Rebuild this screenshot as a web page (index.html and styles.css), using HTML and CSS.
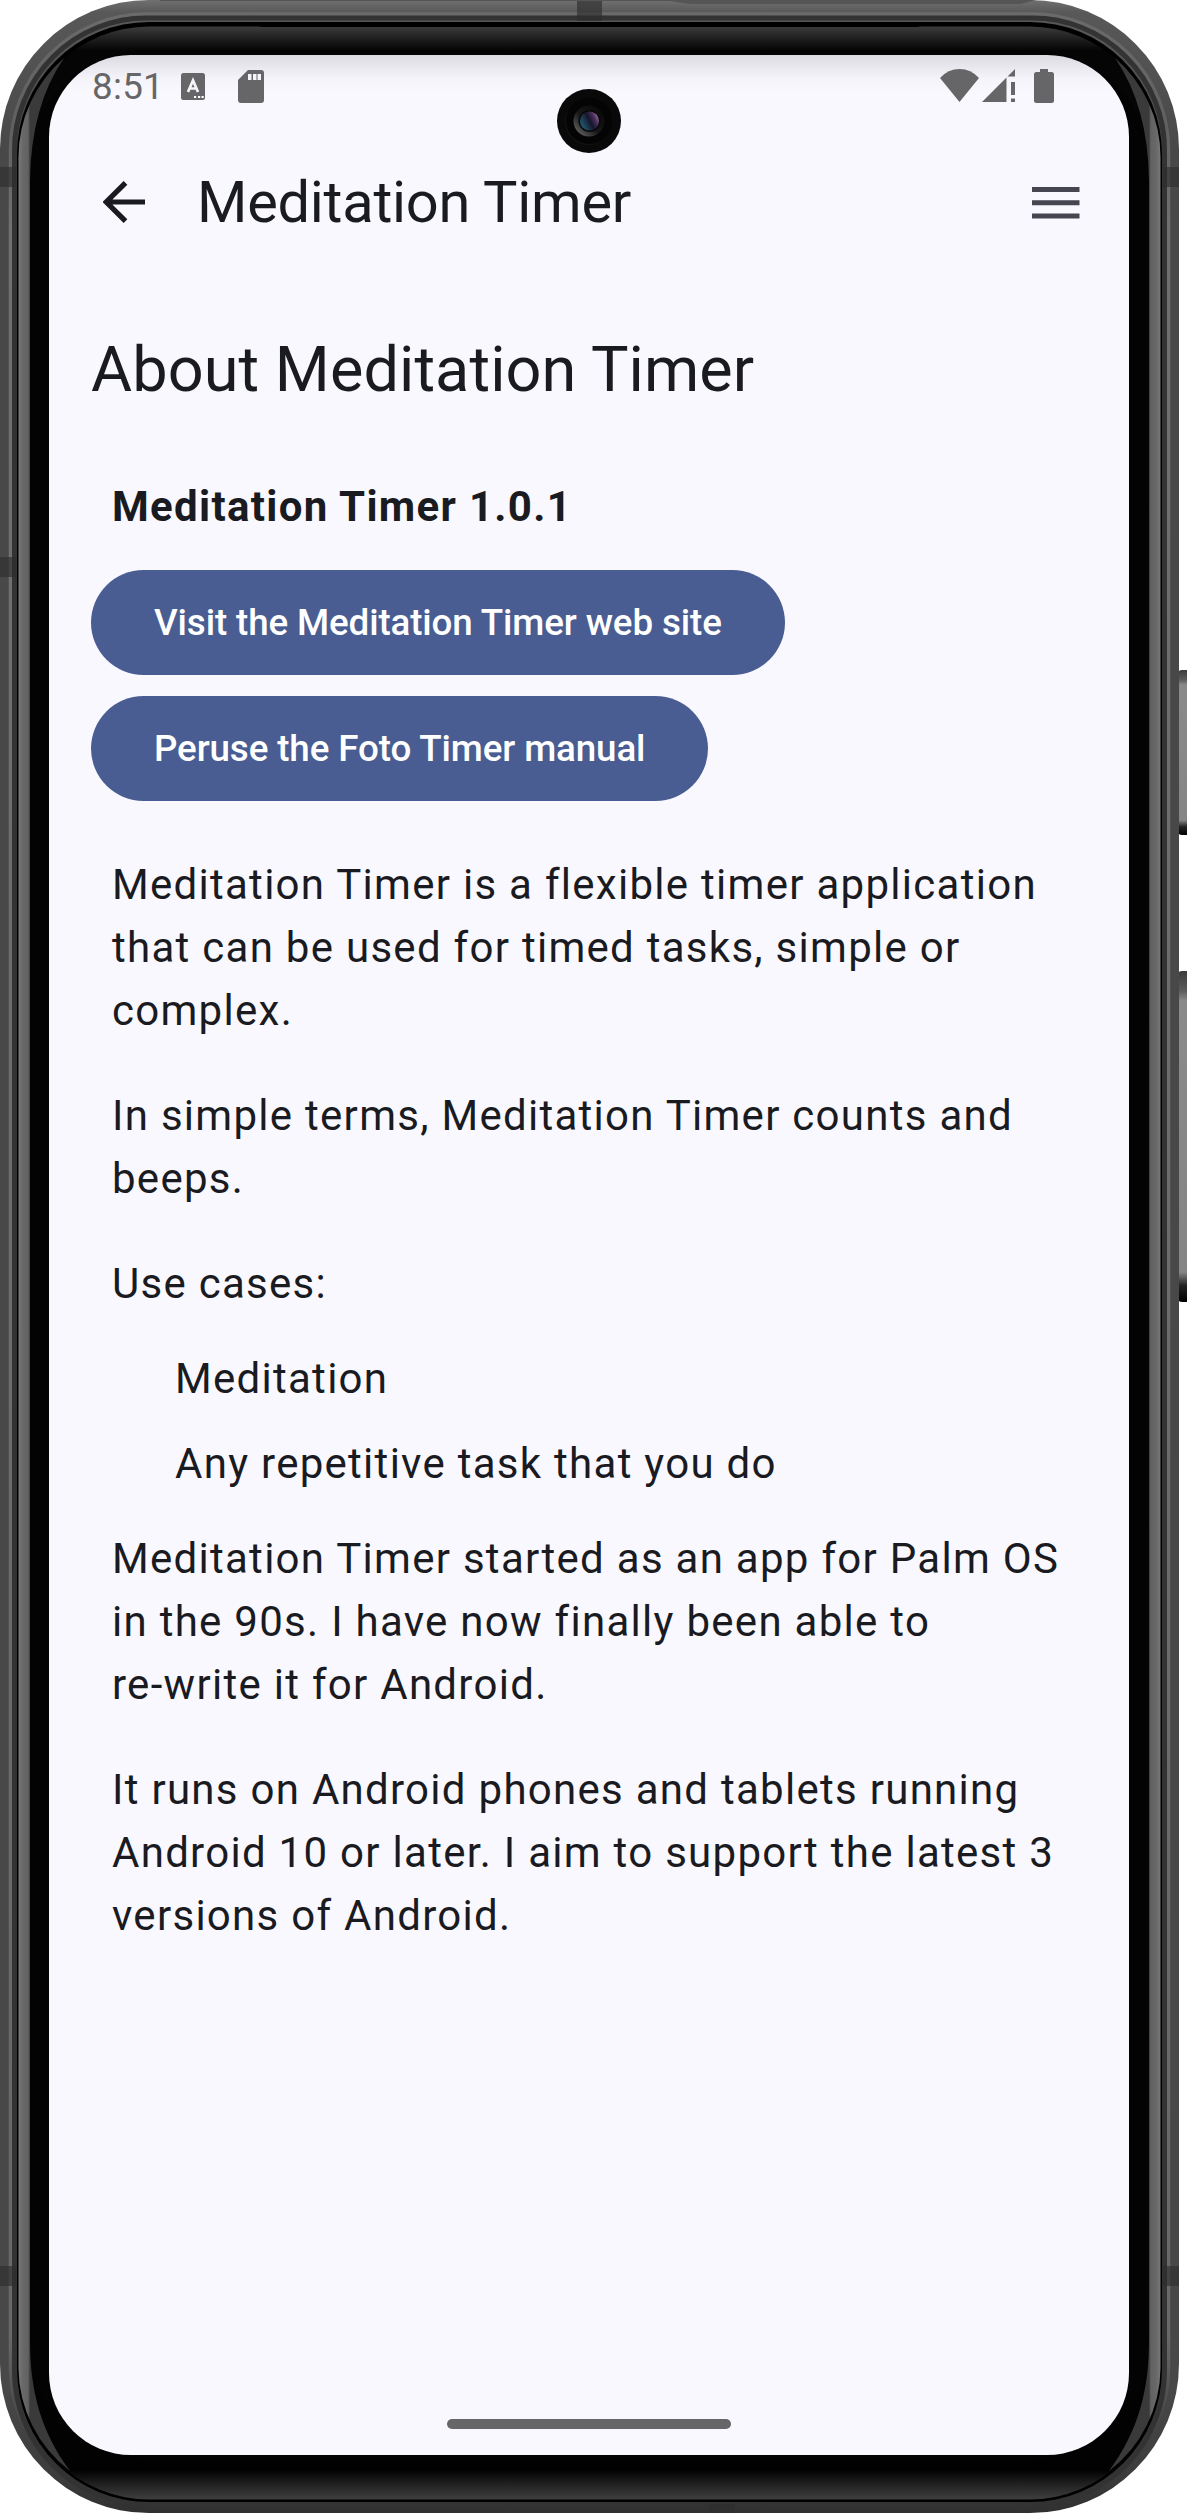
FILE: index.html
```html
<!DOCTYPE html>
<html lang="en">
<head>
<meta charset="utf-8">
<title>About Meditation Timer</title>
<link rel="stylesheet" href="styles.css">
</head>
<body>
<div class="device">
  <svg class="frame" width="1187" height="2513" viewBox="0 0 1187 2513" aria-hidden="true">
    <defs>
      <linearGradient id="outerV" x1="0" y1="0" x2="0" y2="2513" gradientUnits="userSpaceOnUse">
        <stop offset="0" stop-color="#707070"/><stop offset=".005" stop-color="#585858"/><stop offset=".06" stop-color="#484848"/>
        <stop offset=".95" stop-color="#484848"/><stop offset=".985" stop-color="#3c3c3c"/><stop offset="1" stop-color="#303030"/>
      </linearGradient>
      <linearGradient id="shineV" x1="0" y1="0" x2="0" y2="2513" gradientUnits="userSpaceOnUse">
        <stop offset="0" stop-color="#6c6c6c"/><stop offset=".05" stop-color="#606060"/><stop offset=".09" stop-color="#707070"/>
        <stop offset=".93" stop-color="#686868"/><stop offset=".97" stop-color="#404040"/><stop offset="1" stop-color="#2a2a2a"/>
      </linearGradient>
      <linearGradient id="glassV" x1="0" y1="0" x2="0" y2="2513" gradientUnits="userSpaceOnUse">
        <stop offset=".0105" stop-color="#3c3c3c"/><stop offset=".0145" stop-color="#242424"/><stop offset=".02" stop-color="#050505"/>
        <stop offset=".983" stop-color="#020202"/><stop offset=".988" stop-color="#1e1e1e"/><stop offset=".994" stop-color="#3c3c3c"/>
      </linearGradient>
      <linearGradient id="glintL" x1="18" y1="0" x2="30" y2="0" gradientUnits="userSpaceOnUse">
        <stop offset="0" stop-color="#7c7c7c"/><stop offset=".4" stop-color="#686868"/><stop offset=".85" stop-color="#626262"/><stop offset="1" stop-color="#3a3a3a"/>
      </linearGradient>
      <linearGradient id="key" x1="0" y1="0" x2="0" y2="1">
        <stop offset="0" stop-color="#3c3c3c"/><stop offset=".06" stop-color="#5c5c5c"/><stop offset=".09" stop-color="#8a8a8a"/><stop offset=".91" stop-color="#858585"/><stop offset=".95" stop-color="#222"/><stop offset="1" stop-color="#000"/>
      </linearGradient>
      <g id="glint">
        <path d="M18.500 157A131 131 0 0 1 64 58Q31 106 30 180V2340C30 2390 40 2430 70 2471A131 131 0 0 1 18.500 2368Z" fill="url(#glintL)"/>
      </g>
    </defs>
    <rect x="1178" y="670" width="12" height="165" rx="4" fill="url(#key)"/>
    <rect x="1178" y="971" width="12" height="331" rx="4" fill="url(#key)"/>
    <rect x="0" y="0" width="1179" height="2513" rx="149" fill="url(#outerV)"/>
    <path d="M160 0H1020V1H160ZM663 0H1036L1020 4H690Z" fill="#555"/>
    <rect x="10.5" y="14" width="1158" height="2490" rx="136" fill="none" stroke="url(#shineV)" stroke-width="3.500"/>
    <rect x="14.5" y="18" width="1150" height="2485.500" rx="132" fill="none" stroke="#333" stroke-width="5"/>
    <rect x="17" y="22" width="1145" height="2480" rx="132" fill="#000"/>
    <rect x="18.500" y="26.500" width="1142" height="2473" rx="131" fill="url(#glassV)"/>
    <rect x="27" y="50" width="1125" height="2410" rx="122" fill="#030303"/>
    <path d="M247 23H930L917 27H262Z" fill="#000"/>
    <use href="#glint"/>
    <use href="#glint" transform="translate(1179 0) scale(-1 1)"/>
    <g fill="#2e2e2e" fill-opacity=".65">
      <rect x="0" y="167" width="16" height="20"/><rect x="1163" y="167" width="16" height="20"/>
      <rect x="0" y="557" width="16" height="20"/>
      <rect x="0" y="2266" width="16" height="20"/><rect x="1163" y="2266" width="16" height="20"/>
      <rect x="577" y="1" width="25" height="20"/><rect x="709" y="2504" width="26" height="9"/>
    </g>
  </svg>

  <main class="screen">
    <header class="status">
      <span class="clock">8:51</span>
      <svg class="ime" width="24" height="27" viewBox="0 0 24 27"><rect width="24" height="27" rx="2.500" fill="#666668"/><path d="M7 19L12 7.500L17 19M8.500 15.500H15.500" fill="none" stroke="#f5f4fb" stroke-width="2.700"/><path d="M13 23h2.200v2H13zM17 23h2.200v2H17zM20.500 23h2.200v2h-2.200z" fill="#fff"/></svg>
      <svg class="card" width="26" height="33" viewBox="0 0 26 33"><path d="M10 0H23Q26 0 26 3V30Q26 33 23 33H3Q0 33 0 30V10Z" fill="#666668"/><path d="M10 4h3.500v6H10zM15 4h3.500v6H15zM19.500 4h3.500v6h-3.500z" fill="#f5f4fb"/></svg>
      <svg class="signals" width="114" height="34" viewBox="0 0 114 34" fill="#666668"><path d="M0 9Q8 0 19.500 0T39 9L19.500 33Z"/><path d="M42 33L66.500 8.500V33ZM67.500 7.500L75 0V7.500ZM71 13h4v13h-4zM71 29.500h4V33h-4z"/><path d="M100 0h8v3h3.500q2.500 0 2.500 2.500V31.500q0 2.500-2.500 2.500h-15Q94 34 94 31.500V5.500Q94 3 96.500 3H100Z"/></svg>
    </header>
    <nav class="appbar">
      <svg class="back" width="42" height="42" viewBox="0 0 42 42"><path d="M42 21H5M22.500 1.800L3.300 21L22.500 40.200" fill="none" stroke="#1a1b21" stroke-width="5.200"/></svg>
      <span class="bar-title">Meditation Timer</span>
      <svg class="menu" width="48" height="34" viewBox="0 0 48 34"><path d="M0 1h47.500v5H0zM0 14.300h47.500v5H0zM0 27.500h47.500v5H0z" fill="#45464f"/></svg>
    </nav>
    <section class="about">
      <h1>About Meditation Timer</h1>
      <h2>Meditation Timer 1.0.1</h2>
      <div class="links">
        <button>Visit the Meditation Timer web site</button>
        <button>Peruse the Foto Timer manual</button>
      </div>
      <div class="copy">
        <p>Meditation Timer is a flexible timer application<br>that can be used for timed tasks, simple or<br>complex.</p>
        <p>In simple terms, Meditation Timer counts and<br>beeps.</p>
        <p>Use cases:</p>
        <ul><li>Meditation</li><li>Any repetitive task that you do</li></ul>
        <p>Meditation Timer started as an app for Palm OS<br>in the 90s. I have now finally been able to<br>re-write it for Android.</p>
        <p>It runs on Android phones and tablets running<br>Android 10 or later. I aim to support the latest 3<br>versions of Android.</p>
      </div>
    </section>
    <div class="handle"></div>
    <svg class="lens" width="66" height="66" viewBox="0 0 66 66">
      <defs>
        <linearGradient id="ring" x1="0" y1="1" x2="1" y2="0"><stop offset="0" stop-color="#777"/><stop offset=".45" stop-color="#181818"/><stop offset="1" stop-color="#050505"/></linearGradient>
        <linearGradient id="eye" x1="0" y1=".7" x2="1" y2=".2"><stop offset="0" stop-color="#246078"/><stop offset=".5" stop-color="#15152a"/><stop offset=".75" stop-color="#493057"/><stop offset="1" stop-color="#a679b5"/></linearGradient>
      </defs>
      <circle cx="33" cy="33" r="32" fill="#090909"/>
      <circle cx="33" cy="33" r="23.500" fill="#040404" stroke="url(#ring)" stroke-opacity=".2"/>
      <circle cx="33" cy="33" r="15.500" fill="url(#ring)"/>
      <circle cx="33.500" cy="33" r="11" fill="#080808"/>
      <circle cx="33.500" cy="33" r="9.500" fill="url(#eye)"/>
    </svg>
  </main>
</div>
</body>
</html>
```
FILE: styles.css
```css
* { box-sizing: border-box; margin: 0; padding: 0; }
body { width: 1187px; height: 2513px; background: #fff; font-family: Roboto, sans-serif; overflow: hidden; }
svg { display: block; flex: none; }
.device { display: grid; width: 1187px; height: 2513px; }
.frame, .screen { grid-area: 1 / 1; }
.screen {
  position: relative;
  display: flex;
  flex-direction: column;
  width: 1080px;
  height: 2400px;
  margin: 55px 0 0 49px;
  border-radius: 82px;
  overflow: hidden;
  color: #1a1b21;
  background: linear-gradient(#dadae0, #e9e8ee 12px, #f5f4fb 24px, #f9f8ff 38px);
}
.status { display: flex; align-items: flex-start; height: 84px; padding: 14px 75px 0 43px; color: #666668; }
.clock { width: 89px; font-size: 36.75px; line-height: 36px; letter-spacing: .3px; white-space: nowrap; }
.ime { margin-top: 4px; }
.card { margin: 1px 0 0 33px; }
.signals { margin-left: auto; }
.appbar { display: flex; align-items: center; height: 126px; padding: 0 49px 0 54px; }
.menu { margin-top: 1px; }
.bar-title { flex: 1; margin-left: 52px; font-size: 57.75px; line-height: 73px; letter-spacing: -.26px; }
.about { padding: 63px 42px 0; }
h1 { font-size: 63px; line-height: 84px; font-weight: 400; letter-spacing: .08px; white-space: nowrap; }
h2 { margin: 63px 21px 32px; font-size: 42px; line-height: 63px; font-weight: 700; letter-spacing: 1.3px; }
.links { display: flex; flex-direction: column; align-items: flex-start; gap: 21px; }
button { height: 105px; padding: 0 63px; border: 0; border-radius: 53px; background: #495d92; color: #fff; font: 500 36.75px Roboto, sans-serif; letter-spacing: -.12px; white-space: nowrap; }
.copy { margin: 52px 0 0 21px; font-size: 42px; line-height: 63px; letter-spacing: 1.28px; white-space: nowrap; }
p + p { margin-top: 42px; }
ul { list-style: none; padding-left: 63px; margin: 32px 0; }
li + li { margin-top: 22px; }
.handle { width: 284px; height: 10px; margin: auto auto 26px; border-radius: 5px; background: #666668; }
.lens { position: absolute; left: 507px; top: 33px; }
```
